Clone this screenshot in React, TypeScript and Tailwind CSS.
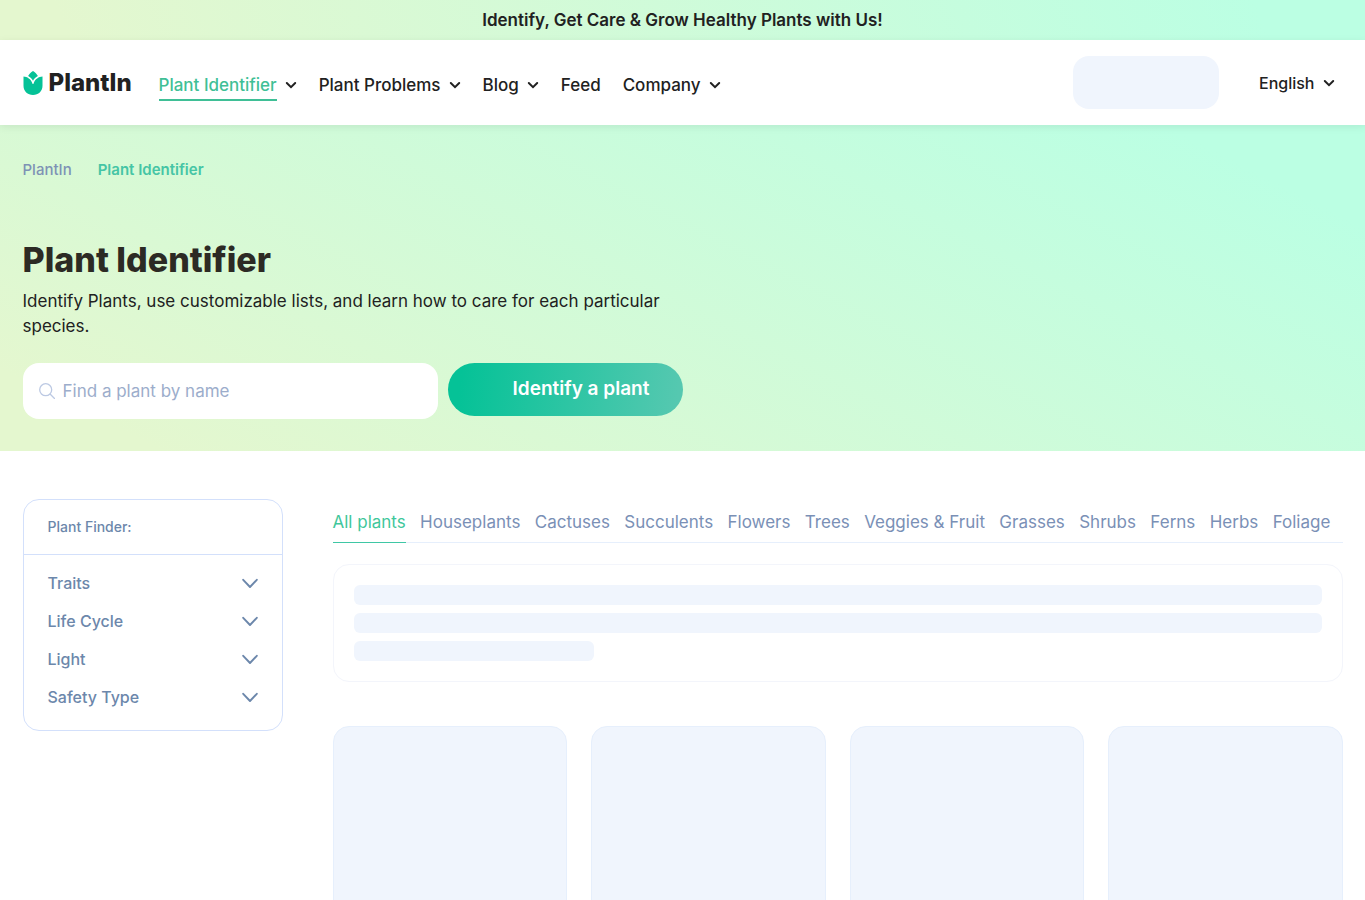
import clsx from 'clsx';

const navItems = [
  { label: 'Plant Identifier', menu: true, active: true },
  { label: 'Plant Problems', menu: true },
  { label: 'Blog', menu: true },
  { label: 'Feed', menu: false },
  { label: 'Company', menu: true },
];

const filters = ['Traits', 'Life Cycle', 'Light', 'Safety Type'];

const categories = [
  'All plants',
  'Houseplants',
  'Cactuses',
  'Succulents',
  'Flowers',
  'Trees',
  'Veggies & Fruit',
  'Grasses',
  'Shrubs',
  'Ferns',
  'Herbs',
  'Foliage',
];

function SmallChevron() {
  return (
    <svg className="w-3 h-3 shrink-0" viewBox="0 0 12 12" fill="none" aria-hidden="true">
      <path d="M1.8 4 6 8.2 10.2 4" stroke="#212121" strokeWidth="2" strokeLinecap="round" />
    </svg>
  );
}

function FilterChevron() {
  return (
    <svg className="w-4 h-4 shrink-0" viewBox="0 0 16 16" fill="none" aria-hidden="true">
      <path
        d="M1.2 4.8 8 12l6.8-7.2"
        stroke="#6c87ab"
        strokeWidth="1.9"
        strokeLinecap="round"
        strokeLinejoin="round"
      />
    </svg>
  );
}

function Logo() {
  return (
    <a href="#" className="flex items-center gap-1.5 w-[136px] shrink-0 text-[#212121]">
      <svg className="w-5 h-6 shrink-0" viewBox="0 0 20 24" aria-hidden="true">
        <path
          d="M.5 5.6c3.7.3 7.5 2.3 9 7.2.1.4.9.4 1 0 1.5-4.9 5.3-6.9 9-7.2v9.2c0 5.400-4.100 9.200-9.500 9.200S.5 20.200.5 14.800z"
          fill="#05c297"
        />
        <path
          d="M10 0c2 1.200 4 3.200 4.900 5.100-2.200 1.100-3.800 2.600-4.900 4.700-1.100-2.100-2.700-3.600-4.900-4.700C6 3.200 8 1.200 10 0z"
          fill="#05c297"
        />
      </svg>
      <span className="text-2xl font-extrabold">PlantIn</span>
    </a>
  );
}

function Header() {
  return (
    <header className="relative bg-white shadow-[0_2px_8px_rgba(0,0,0,0.08)]">
      <div className="mx-auto flex items-center max-w-[1320px] h-[85px] pr-2">
        <Logo />
        <nav className="flex items-center gap-[22px] pt-1 text-[17px] leading-6 font-medium">
          {navItems.map(item => (
            <div key={item.label} className="flex items-center gap-2">
              <a
                href="#"
                className={clsx(
                  'border-b-2 pt-1 pb-0.5',
                  item.active ? 'text-[#3fbf96] border-[#3fbf96]' : 'text-[#212121] border-transparent',
                )}
              >
                {item.label}
              </a>
              {item.menu && <SmallChevron />}
            </div>
          ))}
        </nav>
        <div className="ml-auto flex items-center gap-10">
          <div className="w-[146px] h-[53px] rounded-2xl bg-[#f0f5fd]" />
          <button type="button" className="flex items-center gap-2 text-base font-medium text-[#212121]">
            English
            <SmallChevron />
          </button>
        </div>
      </div>
    </header>
  );
}

function Hero() {
  return (
    <section className="bg-[linear-gradient(27deg,#e4f7cf_8%,#bbffe3_90%)]">
      <div className="mx-auto max-w-[1320px] py-8">
        <nav aria-label="Breadcrumb" className="flex items-center gap-[26px] h-[26px] text-[15px]">
          <a href="#" className="font-medium text-[#7e92b5]">PlantIn</a>
          <a href="#" className="font-semibold text-[#45c5a5]">Plant Identifier</a>
        </nav>
        <div className="max-w-[660px]">
          <h1 className="mt-14 text-[34px] leading-[42px] font-extrabold text-[#2c2a24]">Plant Identifier</h1>
          <p className="mt-2 text-[17px] leading-[25px] text-[#212121]">
            Identify Plants, use customizable lists, and learn how to care for each particular species.
          </p>
          <form className="mt-6 flex items-start gap-2.5">
            <label className="flex flex-1 items-center gap-2 h-14 px-4 rounded-2xl bg-white">
              <svg className="w-4 h-4 shrink-0" viewBox="0 0 16 16" fill="none" aria-hidden="true">
                <circle cx="6.7" cy="6.7" r="6" stroke="#bcc9e3" strokeWidth="1.3" />
                <path d="m11.3 11.3 4.2 4.2" stroke="#bcc9e3" strokeWidth="1.3" strokeLinecap="round" />
              </svg>
              <input
                type="text"
                aria-label="Find a plant by name"
                placeholder="Find a plant by name"
                className="w-full text-[17px] leading-6 outline-none placeholder:text-[#9cadcb]"
              />
            </label>
            <button
              type="button"
              className="h-[53px] w-[235px] pl-16 pr-8 rounded-full whitespace-nowrap text-[19px] font-semibold text-white bg-[linear-gradient(97deg,#05c297_6%,#55c8b0_97%)]"
            >
              Identify a plant
            </button>
          </form>
        </div>
      </div>
    </section>
  );
}

function PlantFinder() {
  return (
    <aside className="w-[260px] shrink-0 border border-[#d3e0fb] rounded-2xl font-medium text-[#6c87ab]">
      <h2 className="px-6 py-[17px] text-sm border-b border-[#d3e0fb]">Plant Finder:</h2>
      <div className="flex flex-col gap-3.5 px-6 pt-4 pb-[21px]">
        {filters.map(name => (
          <button key={name} type="button" className="flex items-center justify-between text-base">
            {name}
            <FilterChevron />
          </button>
        ))}
      </div>
    </aside>
  );
}

function Catalog() {
  return (
    <section className="flex-1 min-w-0">
      <nav className="flex justify-between pr-3 pt-[11px] h-11 border-b border-[#e6effc] text-[17px] leading-6 text-[#7a90b6]">
        {categories.map((name, i) => (
          <a
            key={name}
            href="#"
            className={clsx('h-[33px] whitespace-nowrap', i === 0 && 'text-[#3fc79b] border-b border-[#3fc7a5]')}
          >
            {name}
          </a>
        ))}
      </nav>
      {/* Loading placeholders */}
      <div className="mt-[21px] p-5 flex flex-col gap-2 border border-[#f3f5fb] rounded-2xl">
        <div className="h-5 rounded-md bg-[#f0f5fd]" />
        <div className="h-5 rounded-md bg-[#f0f5fd]" />
        <div className="h-5 w-60 rounded-md bg-[#f0f5fd]" />
      </div>
      <div className="mt-11 grid grid-cols-4 gap-6">
        {[0, 1, 2, 3].map(n => (
          <div key={n} className="h-[300px] rounded-2xl border border-[#e6effc] bg-[#f0f5fd]" />
        ))}
      </div>
    </section>
  );
}

export default function App() {
  return (
    <div className="h-screen overflow-hidden bg-white font-[Inter,'Open_Sans',sans-serif]">
      <div className="flex items-center justify-center h-10 text-[17px] leading-6 font-semibold text-[#212121] bg-[linear-gradient(67deg,#e4f7cf_5%,#bbffe3_92%)]">
        Identify, Get Care & Grow Healthy Plants with Us!
      </div>
      <Header />
      <main>
        <Hero />
        <div className="mx-auto flex items-start gap-[50px] max-w-[1320px] pt-12">
          <PlantFinder />
          <Catalog />
        </div>
      </main>
    </div>
  );
}
